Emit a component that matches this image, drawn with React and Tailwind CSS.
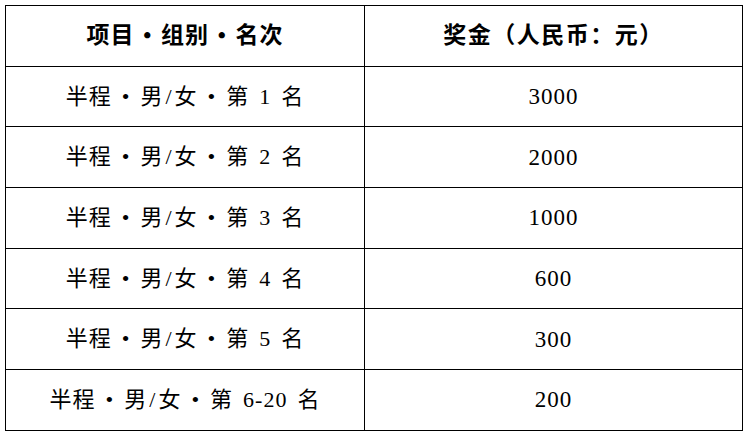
import React from "react";

const rows = [
  ["第 1 名", "3000"],
  ["第 2 名", "2000"],
  ["第 3 名", "1000"],
  ["第 4 名", "600"],
  ["第 5 名", "300"],
  ["第 6-20 名", "200"],
];

export default function App() {
  return (
    <div
      className="w-[749px] h-[435px] bg-white pt-[5px] pl-[5px]"
      style={{ fontFamily: '"Liberation Serif", "Noto Sans CJK SC", serif' }}
    >
      <table className="border-collapse text-black leading-none">
        <colgroup>
          <col className="w-[359px]" />
          <col className="w-[378px]" />
        </colgroup>
        <thead>
          <tr className="h-[60.7px]">
            <th className="border border-black font-bold text-center align-middle text-[23px] tracking-[1px] [word-spacing:2px]">
              项目 • 组别 • 名次
            </th>
            <th className="border border-black font-bold text-center align-middle text-[23px] tracking-[1.5px]">
              奖金（人民币：元）
            </th>
          </tr>
        </thead>
        <tbody>
          {rows.map(([rank, prize]) => (
            <tr key={rank} className="h-[60.7px]">
              <td className="border border-black text-center align-middle text-[22px] tracking-[1px] [word-spacing:3.5px]">
                半程 • 男<span className="px-[2px]">/</span>女 • {rank}
              </td>
              <td className="border border-black text-center align-middle text-[23px] tracking-[1px]">
                {prize}
              </td>
            </tr>
          ))}
        </tbody>
      </table>
    </div>
  );
}
